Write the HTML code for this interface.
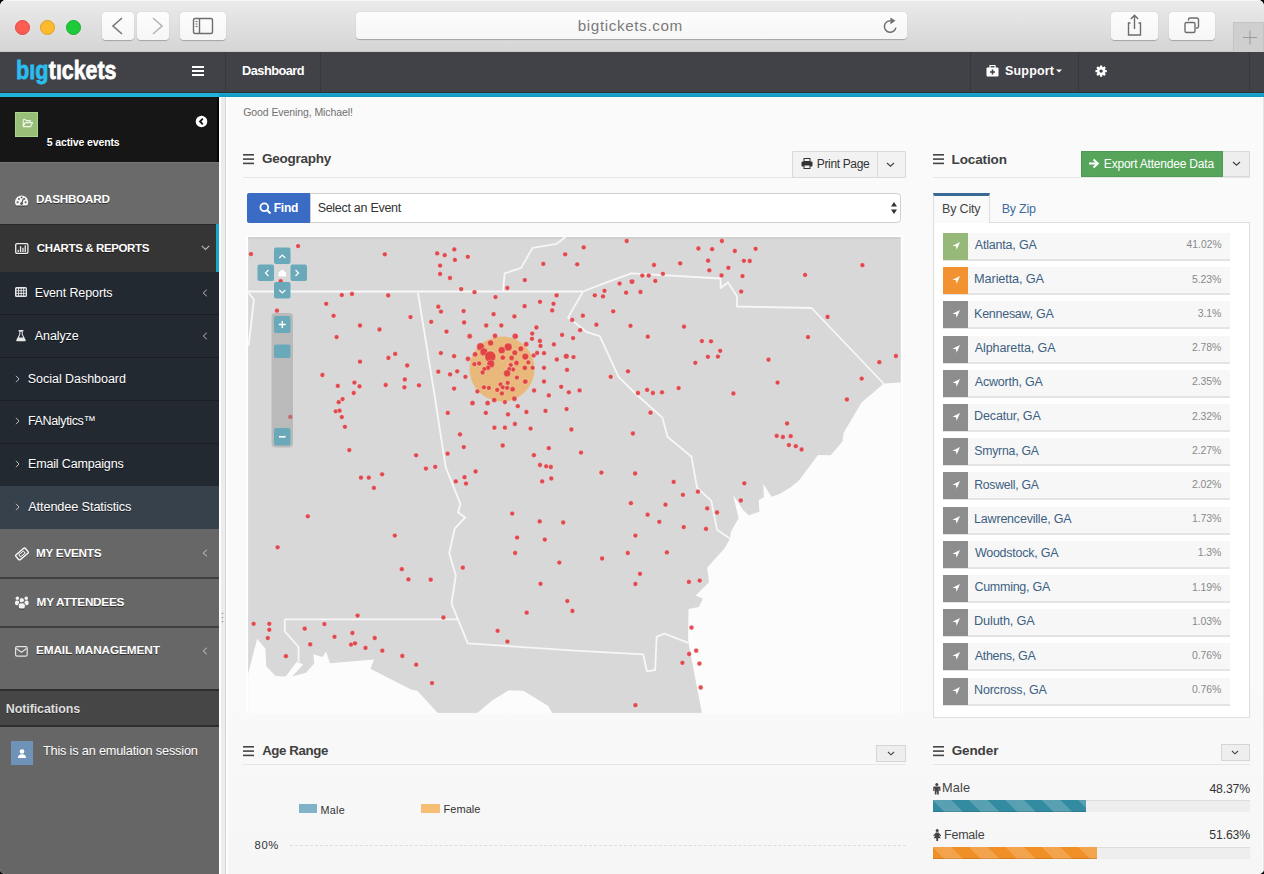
<!DOCTYPE html>
<html><head><meta charset="utf-8">
<style>
*{margin:0;padding:0;box-sizing:border-box}
html,body{width:1264px;height:874px;overflow:hidden;background:#000}
body{font-family:"Liberation Sans",sans-serif;position:relative}
.a{position:absolute}
#win{position:absolute;left:0;top:0;width:1264px;height:874px;border-radius:6px 6px 5px 5px;overflow:hidden;background:#fafafa}
#chrome{left:0;top:0;width:1264px;height:52px;background:linear-gradient(#ebebeb,#d5d5d5);border-bottom:1px solid #c8c8c8}
.tl{width:15px;height:15px;border-radius:50%;top:20px}
.cbtn{background:linear-gradient(#fdfdfd,#f6f6f6);border-radius:4px;box-shadow:0 0.5px 1px rgba(0,0,0,.25)}
#nav{left:0;top:52px;width:1264px;height:42px;background:#414247;border-bottom:1px solid #333}
.nd{top:52px;width:1px;height:41px;background:#37383c}
.wt{color:#fff;font-weight:bold}
#side{left:0;top:97px;width:219px;height:777px;background:#666}
.si{position:absolute;left:0;width:219px;color:#fff}
.tx{position:absolute;white-space:nowrap}
.lbl{position:absolute;white-space:nowrap}
</style></head><body>
<div id="win">
<!-- browser chrome -->
<div id="chrome" class="a">
  <div class="a" style="left:0;top:0;width:1264px;height:1px;background:#f6f6f6"></div>
  <div class="a tl" style="left:15px;background:#fd5c53;border:0.5px solid #e2473f"></div>
  <div class="a tl" style="left:40px;background:#fdbb2b;border:0.5px solid #dfa023"></div>
  <div class="a tl" style="left:66px;background:#1dcb3a;border:0.5px solid #17ad2e"></div>
  <div class="a cbtn" style="left:102px;top:12px;width:32px;height:28px"></div>
  <div class="a cbtn" style="left:137px;top:12px;width:32px;height:28px"></div>
  <svg class="a" style="left:102px;top:12px" width="67" height="28"><path d="M20 6 L11 14 L20 22" fill="none" stroke="#777" stroke-width="1.6"/><path d="M51 6 L60 14 L51 22" fill="none" stroke="#b5b5b5" stroke-width="1.6"/></svg>
  <div class="a cbtn" style="left:180px;top:12px;width:46px;height:28px"></div>
  <svg class="a" style="left:180px;top:12px" width="46" height="28"><rect x="13.5" y="6.5" width="19" height="15" rx="1.5" fill="none" stroke="#6d6d6d" stroke-width="1.4"/><line x1="19.5" y1="7" x2="19.5" y2="21" stroke="#6d6d6d" stroke-width="1.4"/><rect x="15.5" y="9" width="2" height="1" fill="#6d6d6d"/><rect x="15.5" y="11.5" width="2" height="1" fill="#6d6d6d"/><rect x="15.5" y="14" width="2" height="1" fill="#6d6d6d"/></svg>
  <div class="a cbtn" style="left:356px;top:12px;width:551px;height:27px"></div>
  
  <svg class="a" style="left:881px;top:17px" width="18" height="18"><path d="M9.6 3.7 A5.8 5.8 0 1 0 14.9 10.6" fill="none" stroke="#707070" stroke-width="1.5"/><path d="M9.4 0.6 L14.5 3.8 L9.4 7.2 Z" fill="#707070"/></svg>
  <div class="a cbtn" style="left:1111px;top:12px;width:47px;height:28px"></div>
  <svg class="a" style="left:1111px;top:12px" width="47" height="28"><path d="M19.5 11 H17.5 V23 H29.5 V11 H27.5" fill="none" stroke="#6d6d6d" stroke-width="1.4"/><path d="M23.5 17 V3.5 M19.8 7 L23.5 3.3 L27.2 7" fill="none" stroke="#6d6d6d" stroke-width="1.4"/></svg>
  <div class="a cbtn" style="left:1169px;top:12px;width:46px;height:28px"></div>
  <svg class="a" style="left:1169px;top:12px" width="46" height="28"><rect x="16" y="10.5" width="10" height="10" rx="1.5" fill="none" stroke="#6d6d6d" stroke-width="1.4"/><path d="M19.5 8.5 V7.5 A1.5 1.5 0 0 1 21 6 H28 A1.5 1.5 0 0 1 29.5 7.5 V14.5 A1.5 1.5 0 0 1 28 16 H27" fill="none" stroke="#6d6d6d" stroke-width="1.4"/></svg>
  <div class="a" style="left:1233px;top:22px;width:31px;height:30px;background:#cfcfcf;border:1px solid #c4c4c4;border-bottom:none"></div>
  <svg class="a" style="left:1233px;top:22px" width="31" height="30"><path d="M10 15.5 H24 M17 8.5 V22.5" stroke="#9a9a9a" stroke-width="1"/></svg>
</div>
<!-- navbar -->
<div id="nav" class="a"></div>
<div class="a" style="left:0;top:92px;width:1264px;height:1px;background:#2f3034"></div>
<div class="a" style="left:0;top:93px;width:1264px;height:4px;background:linear-gradient(#1aa6cf,#0f97c0)"></div>
<div class="a" style="left:0;top:93px;width:219px;height:4px;background:#1fb1dc"></div>
<div class="a nd" style="left:225px"></div>
<div class="a nd" style="left:320px"></div>
<div class="a nd" style="left:970px"></div>
<div class="a nd" style="left:1078px"></div>
<div class="a nd" style="left:1249px"></div>
<svg class="a" style="left:0;top:52px" width="130" height="40" viewBox="0 52 130 40"><g font-family="Liberation Sans" font-weight="bold" font-size="26.5"><text x="16" y="79.1" fill="#2bbdee" stroke="#2bbdee" stroke-width="0.8" textLength="32.5" lengthAdjust="spacingAndGlyphs">bıg</text><text x="48.8" y="79.1" fill="#fff" stroke="#fff" stroke-width="0.8" textLength="67.6" lengthAdjust="spacingAndGlyphs">tıckets</text></g></svg>
<svg class="a" style="left:192px;top:65px" width="13" height="12"><rect x="0" y="1" width="12" height="2" fill="#fff"/><rect x="0" y="5" width="12" height="2" fill="#fff"/><rect x="0" y="9" width="12" height="2" fill="#fff"/></svg>

<svg class="a" style="left:986px;top:65px" width="14" height="12"><rect x="0.5" y="2.5" width="12" height="9" rx="1" fill="#fff"/><rect x="4" y="0.5" width="5" height="3" fill="none" stroke="#fff" stroke-width="1.2"/><path d="M6.5 4.5 V9.5 M4 7 H9" stroke="#414247" stroke-width="1.6"/></svg>

<svg class="a" style="left:1056px;top:69px" width="7" height="5"><path d="M0 0.5 H6 L3 3.5Z" fill="#fff"/></svg>
<svg class="a" style="left:1095px;top:65.2px" width="12.2" height="12.2"><g fill="#fff"><circle cx="6.1" cy="6.1" r="4.1"/><rect x="4.9" y="0.4" width="2.4" height="3" rx="0.4" transform="rotate(0 6.1 6.1)"/><rect x="4.9" y="0.4" width="2.4" height="3" rx="0.4" transform="rotate(45 6.1 6.1)"/><rect x="4.9" y="0.4" width="2.4" height="3" rx="0.4" transform="rotate(90 6.1 6.1)"/><rect x="4.9" y="0.4" width="2.4" height="3" rx="0.4" transform="rotate(135 6.1 6.1)"/><rect x="4.9" y="0.4" width="2.4" height="3" rx="0.4" transform="rotate(180 6.1 6.1)"/><rect x="4.9" y="0.4" width="2.4" height="3" rx="0.4" transform="rotate(225 6.1 6.1)"/><rect x="4.9" y="0.4" width="2.4" height="3" rx="0.4" transform="rotate(270 6.1 6.1)"/><rect x="4.9" y="0.4" width="2.4" height="3" rx="0.4" transform="rotate(315 6.1 6.1)"/></g><circle cx="6.1" cy="6.1" r="1.7" fill="#414247"/></svg>

<!-- sidebar -->
<div id="side" class="a"></div>
<div class="a" style="left:0;top:97px;width:219px;height:65px;background:#161616"></div>
<div class="a" style="left:217px;top:97px;width:2px;height:65px;background:#050505"></div>
<div class="a" style="left:15px;top:112px;width:23px;height:25px;background:#97bf78"></div>
<svg class="a" style="left:15px;top:112px" width="23" height="25"><rect x="0.5" y="0.5" width="22" height="24" fill="none" stroke="#a9d68c" stroke-width="1"/><path d="M8.2 14.6 V8.4 Q8.2 7.3 9.3 7.3 Q10.6 7.3 11.2 8.6 H15.2 V10.6 M8.2 14.6 L10.2 10.6 H17.6 L15.6 14.6 Z" fill="none" stroke="#eef6e8" stroke-width="1.1" stroke-linejoin="round"/></svg>

<svg class="a" style="left:195px;top:115px" width="13" height="13"><circle cx="6.5" cy="6.5" r="5.8" fill="#fff"/><path d="M7.8 3.6 L5 6.5 L7.8 9.4" fill="none" stroke="#161616" stroke-width="1.8"/></svg>
<!-- dashboard -->
<div class="a" style="left:0;top:162px;width:219px;height:62px;background:#6a6a6a;border-top:1px solid #767676"></div>

<svg class="a" style="left:15px;top:194.8px" width="14" height="13"><path d="M1.0 11.6 A6.6 6.6 0 1 1 12.2 11.6 Z" fill="rgba(0,0,0,.4)"/><path d="M1.0 10.6 A6.6 6.6 0 1 1 12.2 10.6 Z" fill="#f4f4f4"/><g fill="#555"><circle cx="2.6" cy="7.2" r="0.95"/><circle cx="3.9" cy="3.9" r="0.95"/><circle cx="6.6" cy="2.4" r="0.95"/><circle cx="10.6" cy="7.2" r="0.95"/><circle cx="9.3" cy="3.9" r="0.95"/><circle cx="6.6" cy="8.6" r="1.4"/></g><path d="M6.6 8.6 L8.4 3.6" stroke="#555" stroke-width="1.2"/></svg>
<!-- charts & reports -->
<div class="a" style="left:0;top:224px;width:219px;height:48px;background:#353535;border-top:1px solid #25282c"></div>
<div class="a" style="left:216px;top:224px;width:3px;height:48px;background:#1aa6cf"></div>

<svg class="a" style="left:15px;top:242.5px" width="14" height="12"><rect x="0.7" y="0.7" width="12.2" height="9.6" rx="1.3" fill="none" stroke="#f0f0f0" stroke-width="1.3"/><rect x="2.6" y="6.8" width="1.3" height="2.2" fill="#f0f0f0"/><rect x="4.9" y="3.2" width="1.3" height="5.8" fill="#f0f0f0"/><rect x="7.3" y="4.8" width="1.3" height="4.2" fill="#f0f0f0"/><rect x="9.6" y="2.4" width="1.3" height="6.6" fill="#f0f0f0"/><rect x="1.4" y="11" width="11" height="1" fill="rgba(0,0,0,.3)"/></svg>
<svg class="a" style="left:201px;top:245px" width="9" height="6"><path d="M0.8 0.8 L4.5 4.5 L8.2 0.8" fill="none" stroke="#bbb" stroke-width="1.1"/></svg>
<!-- submenu -->
<div class="a" style="left:0;top:272px;width:219px;height:257px;background:#222931"></div>
<div class="a" style="left:0;top:314px;width:219px;height:1px;background:#1a1f25"></div>
<div class="a" style="left:0;top:357px;width:219px;height:1px;background:#1a1f25"></div>
<div class="a" style="left:0;top:400px;width:219px;height:1px;background:#1a1f25"></div>
<div class="a" style="left:0;top:443px;width:219px;height:1px;background:#1a1f25"></div>
<div class="a" style="left:0;top:486px;width:219px;height:43px;background:#37414b"></div>

<svg class="a" style="left:15px;top:287.3px" width="12" height="11"><rect x="0" y="0" width="12" height="10" rx="1.6" fill="#e6e6e6"/><rect x="1.50" y="1.60" width="1.6" height="1.7" fill="#222931"/><rect x="4.05" y="1.60" width="1.6" height="1.7" fill="#222931"/><rect x="6.60" y="1.60" width="1.6" height="1.7" fill="#222931"/><rect x="9.15" y="1.60" width="1.6" height="1.7" fill="#222931"/><rect x="1.50" y="4.20" width="1.6" height="1.7" fill="#222931"/><rect x="4.05" y="4.20" width="1.6" height="1.7" fill="#222931"/><rect x="6.60" y="4.20" width="1.6" height="1.7" fill="#222931"/><rect x="9.15" y="4.20" width="1.6" height="1.7" fill="#222931"/><rect x="1.50" y="6.80" width="1.6" height="1.7" fill="#222931"/><rect x="4.05" y="6.80" width="1.6" height="1.7" fill="#222931"/><rect x="6.60" y="6.80" width="1.6" height="1.7" fill="#222931"/><rect x="9.15" y="6.80" width="1.6" height="1.7" fill="#222931"/></svg>
<svg class="a" style="left:202px;top:289px" width="6" height="8"><path d="M4.8 0.8 L1.2 4 L4.8 7.2" fill="none" stroke="#bbb" stroke-width="1"/></svg>

<svg class="a" style="left:16px;top:330px" width="10" height="12"><rect x="2.6" y="0" width="4.8" height="1.4" fill="#e8e8e8"/><path d="M3.3 1.2 V4.2 L0.3 10 Q0 11.2 1.2 11.2 H8.8 Q10 11.2 9.7 10 L6.7 4.2 V1.2 Z" fill="#e8e8e8"/><path d="M4.3 2 V4.5 L2.8 7.4 H7.2 L5.7 4.5 V2Z" fill="#222931"/></svg>
<svg class="a" style="left:202px;top:332px" width="6" height="8"><path d="M4.8 0.8 L1.2 4 L4.8 7.2" fill="none" stroke="#bbb" stroke-width="1"/></svg>




<svg class="a" style="left:15px;top:374.5px" width="5" height="8"><path d="M1 0.8 L4 4 L1 7.2" fill="none" stroke="#bbb" stroke-width="1"/></svg>
<svg class="a" style="left:15px;top:417px" width="5" height="8"><path d="M1 0.8 L4 4 L1 7.2" fill="none" stroke="#bbb" stroke-width="1"/></svg>
<svg class="a" style="left:15px;top:460px" width="5" height="8"><path d="M1 0.8 L4 4 L1 7.2" fill="none" stroke="#bbb" stroke-width="1"/></svg>
<svg class="a" style="left:15px;top:503px" width="5" height="8"><path d="M1 0.8 L4 4 L1 7.2" fill="none" stroke="#bbb" stroke-width="1"/></svg>
<!-- lower menu -->
<div class="a" style="left:0;top:529px;width:219px;height:160px;background:#676767"></div>
<div class="a" style="left:0;top:577px;width:219px;height:2px;background:#3f3f3f"></div>
<div class="a" style="left:0;top:626px;width:219px;height:2px;background:#3f3f3f"></div>

<svg class="a" style="left:15px;top:547px" width="14" height="14"><g transform="rotate(-40 7 7)"><rect x="0.8" y="3.8" width="12.4" height="6.4" rx="1.2" fill="none" stroke="#fff" stroke-width="1.3"/><rect x="4" y="5.6" width="6" height="2.8" fill="none" stroke="#fff" stroke-width="0.9"/></g></svg>
<svg class="a" style="left:202px;top:549px" width="6" height="8"><path d="M4.8 0.8 L1.2 4 L4.8 7.2" fill="none" stroke="#ccc" stroke-width="1"/></svg>

<svg class="a" style="left:15px;top:595.5px" width="14" height="15"><g fill="rgba(0,0,0,.35)" transform="translate(0,1)"><rect x="3.6" y="7.2" width="6.4" height="5.6" rx="2.2"/></g><g fill="#f2f2f2"><circle cx="2.4" cy="2.2" r="1.8"/><circle cx="11.2" cy="2.2" r="1.8"/><circle cx="6.8" cy="4.2" r="2.3"/><rect x="0" y="4.6" width="4.2" height="4.6" rx="1.8"/><rect x="9.4" y="4.6" width="4.2" height="4.6" rx="1.8"/><rect x="3.6" y="7" width="6.4" height="5.6" rx="2.2"/></g><g fill="none" stroke="#676767" stroke-width="0.8"><circle cx="6.8" cy="4.2" r="2.7"/><path d="M3.2 12.6 V9 Q3.2 6.6 6.8 6.6 Q10.4 6.6 10.4 9 V12.6"/></g></svg>

<svg class="a" style="left:15px;top:645.5px" width="13" height="11"><rect x="0.6" y="0.6" width="11.6" height="9.6" rx="1.5" fill="none" stroke="#e4e4e4" stroke-width="1.2"/><path d="M1.2 2.6 L6.4 6.2 L11.6 2.6" fill="none" stroke="#e4e4e4" stroke-width="1.2"/></svg>
<svg class="a" style="left:202px;top:647px" width="6" height="8"><path d="M4.8 0.8 L1.2 4 L4.8 7.2" fill="none" stroke="#ccc" stroke-width="1"/></svg>
<!-- notifications -->
<div class="a" style="left:0;top:689px;width:219px;height:38px;background:#464646;border-top:2px solid #2e2e2e;border-bottom:2px solid #2e2e2e"></div>

<div class="a" style="left:11px;top:741px;width:22px;height:24px;background:#6f93b8"></div>
<svg class="a" style="left:11px;top:741px" width="22" height="24"><circle cx="11" cy="10.5" r="2.3" fill="#fff"/><path d="M7 17 Q7 13.3 11 13.3 Q15 13.3 15 17Z" fill="#fff"/></svg>

<!-- content -->
<div class="a" style="left:228px;top:97px;width:1034px;height:777px;background:linear-gradient(#fafafa 0px,#fafafa 560px,#f6f6f6 777px)"></div>
<div class="a" style="left:1262.5px;top:97px;width:1.5px;height:777px;background:#e4e4e4"></div>

<!-- geography header -->
<svg class="a" style="left:243px;top:154px" width="12" height="11"><rect y="0" width="11" height="1.6" fill="#444"/><rect y="4.3" width="11" height="1.6" fill="#444"/><rect y="8.6" width="11" height="1.6" fill="#444"/></svg>

<div class="a" style="left:243px;top:177px;width:663px;height:1px;background:#e6e6e6"></div>
<div class="a" style="left:792px;top:151px;width:114px;height:27px;background:#f2f2f2;border:1px solid #d9d9d9;border-radius:1px"></div>
<div class="a" style="left:877px;top:151px;width:1px;height:27px;background:#d9d9d9"></div>
<svg class="a" style="left:801px;top:158px" width="12" height="11"><rect x="3" y="0.5" width="6" height="3" fill="none" stroke="#333" stroke-width="1"/><rect x="0.5" y="3.5" width="11" height="5" rx="1" fill="#333"/><rect x="3" y="7" width="6" height="3.5" fill="#f2f2f2" stroke="#333" stroke-width="1"/></svg>

<svg class="a" style="left:886px;top:162px" width="9" height="6"><path d="M1 1 L4.5 4.3 L8 1" fill="none" stroke="#444" stroke-width="1.2"/></svg>
<!-- find + select -->
<div class="a" style="left:247px;top:193px;width:63px;height:30px;background:#3a6cc6;border-radius:2px 0 0 2px"></div>
<svg class="a" style="left:259px;top:202px" width="13" height="13"><circle cx="5.3" cy="5.3" r="3.9" fill="none" stroke="#fff" stroke-width="1.8"/><path d="M8.2 8.2 L11.5 11.5" stroke="#fff" stroke-width="2"/></svg>

<div class="a" style="left:310px;top:193px;width:591px;height:30px;background:#fff;border:1px solid #cfcfcf;border-radius:0 4px 4px 0"></div>

<svg class="a" style="left:890px;top:201px" width="8" height="14"><path d="M4 1 L7 5.5 H1Z M4 13 L7 8.5 H1Z" fill="#333"/></svg>
<!-- map -->
<svg id="mapsvg" class="a" style="left:246px;top:235px" width="658" height="479" viewBox="246 235 658 479">
<rect x="246.5" y="235.6" width="656.5" height="477.4" fill="#ffffff"/>
<rect x="248.1" y="237.2" width="652.7" height="475.7" fill="#d8d8d8"/>
<rect x="248.1" y="237.2" width="652.7" height="1.6" fill="#cdcdcd"/>
<polygon points="900.8,382.5 883.5,383.5 871.7,394 861.7,402.2 843.5,433.1 842.6,441.3 830.7,455.3 818,455 798.9,480.5 790.7,487.2 780,493.7 771.6,496.8 763.3,483.9 763.9,497.3 758.7,499.9 759.4,511.7 748.9,515.3 743.3,510.2 733,494.7 738.6,517.9 730.9,531.8 729.9,539 724.6,548.2 707.1,567.8 709.1,582.2 695.7,595.6 702.9,598.7 698.8,606.9 688.5,609 688.1,640.9 701.9,713 900.8,713 900.8,382.5" fill="#fcfcfc"/>
<polygon points="248.1,713 248.1,672.8 248.5,672.8 257.1,638.7 265.4,648.8 266.3,666.3 275.6,676.1 285.7,676.5 296.8,661.7 303.2,664.5 292.1,676.5 306,672.8 314.3,663.2 313.3,654.3 322.5,657.1 326.2,651.6 329.9,663.2 374.1,659.5 370.5,668.7 411,689.4 417.4,690.8 437.7,713 477.3,713 492.1,700.4 508.7,690.3 523.4,690.8 548.3,706 552,713" fill="#fcfcfc"/>
<g fill="none" stroke="#f7f7f7" stroke-width="1.8" stroke-linejoin="round">
<polyline points="247,291.5 583,291.5"/>
<polyline points="248.5,292.5 253.9,299.8 248.5,346.2"/>
<polyline points="417.9,292.5 434.7,396 445.6,466.8 460.5,504.1 458,512.3 465.2,517.4 454.7,528.7 449.2,553 455.8,575.5 451.5,603.7 467.8,643.3 575,650.7 643.2,654.3 646.9,671.3 655.2,670 656.6,636.8 664.4,633.7 688.3,642.9"/>
<polyline points="284.8,619.3 457.5,619.3"/>
<polyline points="284.8,619.3 284.8,631.3 298.6,647 298.6,661.7"/>
<polyline points="502.9,291.6 504.7,273.4 521.1,267.9 532.6,247.9 556.6,243.9 566.6,236"/>
<polyline points="583,291.5 568,317.6 572.3,320.6 586.9,332.2 599.8,336.1 618.7,377.2 637,395 662.4,417.7 667.5,436.8 691.5,456.8 697,487.7 711.3,500.9 717,529.7 729.9,538.5"/>
<polyline points="583,291.5 610,281.2 631.4,273.4 720.6,278.5 720.6,288 727.9,282.5 737,296.2 737,306.5 811.6,308 883.5,383.5"/>
</g>
<circle cx="502" cy="369" r="32.5" fill="#e9b97b"/>
<g fill="#e03238" fill-opacity="0.86" stroke="rgba(255,255,255,0.3)" stroke-width="1">
<circle cx="469.7" cy="336.2" r="2.6"/>
<circle cx="495.0" cy="335.8" r="2.6"/>
<circle cx="515.2" cy="336.2" r="3.0"/>
<circle cx="532.2" cy="333.6" r="2.4"/>
<circle cx="532.0" cy="338.8" r="2.4"/>
<circle cx="539.9" cy="341.0" r="2.4"/>
<circle cx="540.5" cy="345.9" r="2.4"/>
<circle cx="526.2" cy="344.2" r="2.6"/>
<circle cx="490.6" cy="342.9" r="3.0"/>
<circle cx="480.5" cy="346.7" r="3.9"/>
<circle cx="483.9" cy="351.9" r="3.9"/>
<circle cx="490.3" cy="356.6" r="5.6"/>
<circle cx="490.8" cy="363.9" r="3.9"/>
<circle cx="488.0" cy="367.8" r="2.6"/>
<circle cx="484.3" cy="369.1" r="2.4"/>
<circle cx="482.6" cy="372.5" r="2.4"/>
<circle cx="475.1" cy="354.3" r="2.6"/>
<circle cx="468.0" cy="358.8" r="2.6"/>
<circle cx="474.4" cy="364.2" r="2.4"/>
<circle cx="479.2" cy="363.5" r="2.4"/>
<circle cx="477.4" cy="391.4" r="2.4"/>
<circle cx="483.9" cy="387.3" r="2.4"/>
<circle cx="488.9" cy="387.9" r="2.4"/>
<circle cx="472.5" cy="403.0" r="2.6"/>
<circle cx="487.6" cy="403.0" r="2.6"/>
<circle cx="494.2" cy="400.0" r="2.6"/>
<circle cx="504.9" cy="402.1" r="2.4"/>
<circle cx="514.4" cy="398.7" r="2.6"/>
<circle cx="501.7" cy="350.2" r="3.6"/>
<circle cx="508.2" cy="347.0" r="4.0"/>
<circle cx="502.8" cy="357.5" r="2.6"/>
<circle cx="514.8" cy="352.7" r="2.8"/>
<circle cx="511.6" cy="357.9" r="2.6"/>
<circle cx="520.8" cy="348.7" r="2.8"/>
<circle cx="525.3" cy="356.6" r="3.4"/>
<circle cx="516.5" cy="362.9" r="2.6"/>
<circle cx="528.3" cy="362.4" r="2.4"/>
<circle cx="510.7" cy="365.0" r="2.4"/>
<circle cx="513.1" cy="369.5" r="2.4"/>
<circle cx="509.2" cy="369.1" r="2.4"/>
<circle cx="507.1" cy="373.3" r="3.6"/>
<circle cx="524.8" cy="367.8" r="2.6"/>
<circle cx="532.6" cy="367.8" r="2.4"/>
<circle cx="516.9" cy="377.6" r="2.4"/>
<circle cx="525.3" cy="381.5" r="2.6"/>
<circle cx="534.1" cy="390.5" r="2.4"/>
<circle cx="533.7" cy="355.5" r="2.4"/>
<circle cx="537.1" cy="353.0" r="2.4"/>
<circle cx="544.0" cy="353.2" r="2.4"/>
<circle cx="544.0" cy="367.8" r="2.4"/>
<circle cx="544.0" cy="381.5" r="2.4"/>
<circle cx="465.4" cy="376.8" r="2.4"/>
<circle cx="500.6" cy="384.5" r="2.4"/>
<circle cx="507.7" cy="382.8" r="2.4"/>
<circle cx="502.8" cy="387.3" r="2.4"/>
<circle cx="507.1" cy="387.9" r="2.4"/>
<circle cx="497.2" cy="389.9" r="2.4"/>
<circle cx="512.6" cy="389.2" r="2.6"/>
<circle cx="501.9" cy="393.5" r="2.4"/>
<circle cx="251.0" cy="254.1" r="2.4"/>
<circle cx="298.1" cy="246.1" r="2.4"/>
<circle cx="384.8" cy="254.3" r="2.4"/>
<circle cx="280.7" cy="281.2" r="2.4"/>
<circle cx="341.8" cy="295.1" r="2.4"/>
<circle cx="352.0" cy="294.0" r="2.4"/>
<circle cx="388.2" cy="295.4" r="2.4"/>
<circle cx="326.2" cy="303.8" r="2.4"/>
<circle cx="277.0" cy="310.7" r="2.4"/>
<circle cx="333.6" cy="315.8" r="2.4"/>
<circle cx="410.5" cy="317.1" r="2.4"/>
<circle cx="360.0" cy="325.5" r="2.4"/>
<circle cx="379.5" cy="329.5" r="2.4"/>
<circle cx="336.6" cy="337.1" r="2.4"/>
<circle cx="395.2" cy="353.9" r="2.4"/>
<circle cx="388.4" cy="357.9" r="2.4"/>
<circle cx="360.0" cy="361.7" r="2.4"/>
<circle cx="407.2" cy="365.5" r="2.4"/>
<circle cx="322.4" cy="375.0" r="2.4"/>
<circle cx="337.8" cy="385.9" r="2.4"/>
<circle cx="354.4" cy="382.6" r="2.4"/>
<circle cx="359.5" cy="386.3" r="2.4"/>
<circle cx="385.7" cy="385.0" r="2.4"/>
<circle cx="404.8" cy="379.5" r="2.4"/>
<circle cx="404.4" cy="387.3" r="2.4"/>
<circle cx="353.7" cy="393.0" r="2.4"/>
<circle cx="437.2" cy="253.4" r="2.4"/>
<circle cx="444.7" cy="255.2" r="2.4"/>
<circle cx="454.3" cy="249.4" r="2.4"/>
<circle cx="454.9" cy="259.9" r="2.4"/>
<circle cx="467.8" cy="256.8" r="2.4"/>
<circle cx="440.1" cy="265.6" r="2.4"/>
<circle cx="440.1" cy="274.0" r="2.4"/>
<circle cx="450.0" cy="278.0" r="2.4"/>
<circle cx="461.2" cy="289.1" r="2.4"/>
<circle cx="474.5" cy="292.2" r="2.4"/>
<circle cx="507.3" cy="288.0" r="2.4"/>
<circle cx="524.8" cy="280.1" r="2.4"/>
<circle cx="543.3" cy="263.9" r="2.4"/>
<circle cx="565.2" cy="254.3" r="2.4"/>
<circle cx="495.5" cy="297.1" r="2.4"/>
<circle cx="556.6" cy="295.4" r="2.4"/>
<circle cx="540.0" cy="301.8" r="2.4"/>
<circle cx="553.5" cy="303.8" r="2.4"/>
<circle cx="552.2" cy="310.4" r="2.4"/>
<circle cx="524.6" cy="306.2" r="2.4"/>
<circle cx="438.3" cy="306.7" r="2.4"/>
<circle cx="441.0" cy="311.6" r="2.4"/>
<circle cx="463.6" cy="311.1" r="2.4"/>
<circle cx="493.6" cy="314.2" r="2.4"/>
<circle cx="514.4" cy="316.4" r="2.4"/>
<circle cx="572.2" cy="319.9" r="2.4"/>
<circle cx="431.2" cy="321.8" r="2.4"/>
<circle cx="464.1" cy="322.5" r="2.4"/>
<circle cx="486.2" cy="325.5" r="2.4"/>
<circle cx="501.3" cy="325.5" r="2.4"/>
<circle cx="536.4" cy="327.5" r="2.4"/>
<circle cx="446.5" cy="331.6" r="2.4"/>
<circle cx="562.1" cy="334.9" r="2.4"/>
<circle cx="573.1" cy="338.1" r="2.4"/>
<circle cx="553.9" cy="344.4" r="2.4"/>
<circle cx="566.3" cy="356.2" r="2.8"/>
<circle cx="573.5" cy="357.1" r="2.4"/>
<circle cx="440.9" cy="353.1" r="2.4"/>
<circle cx="454.1" cy="356.2" r="2.4"/>
<circle cx="556.8" cy="359.5" r="2.4"/>
<circle cx="567.0" cy="369.9" r="2.4"/>
<circle cx="438.3" cy="371.7" r="2.4"/>
<circle cx="450.1" cy="374.4" r="2.4"/>
<circle cx="457.2" cy="371.3" r="2.4"/>
<circle cx="561.2" cy="386.8" r="2.4"/>
<circle cx="568.8" cy="392.3" r="2.4"/>
<circle cx="419.0" cy="385.3" r="2.4"/>
<circle cx="454.1" cy="388.6" r="2.4"/>
<circle cx="548.8" cy="395.4" r="2.4"/>
<circle cx="583.7" cy="247.4" r="2.4"/>
<circle cx="626.7" cy="241.0" r="2.4"/>
<circle cx="577.2" cy="264.3" r="2.4"/>
<circle cx="654.0" cy="265.0" r="2.4"/>
<circle cx="680.2" cy="263.4" r="2.4"/>
<circle cx="698.4" cy="248.5" r="2.4"/>
<circle cx="712.1" cy="249.2" r="2.4"/>
<circle cx="721.9" cy="241.0" r="2.4"/>
<circle cx="734.8" cy="251.0" r="2.4"/>
<circle cx="708.1" cy="260.7" r="2.4"/>
<circle cx="709.3" cy="270.3" r="2.4"/>
<circle cx="728.4" cy="267.8" r="2.4"/>
<circle cx="721.5" cy="275.4" r="2.4"/>
<circle cx="642.3" cy="275.6" r="2.4"/>
<circle cx="648.7" cy="275.6" r="2.4"/>
<circle cx="662.9" cy="273.8" r="2.4"/>
<circle cx="655.3" cy="280.9" r="2.4"/>
<circle cx="632.0" cy="281.6" r="2.7"/>
<circle cx="619.6" cy="283.6" r="2.4"/>
<circle cx="604.5" cy="290.8" r="2.4"/>
<circle cx="594.8" cy="295.3" r="2.4"/>
<circle cx="603.0" cy="296.4" r="2.4"/>
<circle cx="626.1" cy="292.7" r="2.4"/>
<circle cx="640.5" cy="292.0" r="2.4"/>
<circle cx="613.2" cy="311.3" r="2.4"/>
<circle cx="582.9" cy="315.7" r="2.4"/>
<circle cx="596.4" cy="324.7" r="2.4"/>
<circle cx="580.1" cy="330.2" r="2.4"/>
<circle cx="630.5" cy="325.8" r="2.4"/>
<circle cx="647.8" cy="336.7" r="2.4"/>
<circle cx="684.0" cy="326.7" r="2.4"/>
<circle cx="701.9" cy="341.1" r="2.4"/>
<circle cx="711.0" cy="341.3" r="2.4"/>
<circle cx="720.2" cy="350.8" r="2.4"/>
<circle cx="707.9" cy="356.8" r="2.4"/>
<circle cx="717.9" cy="356.6" r="2.4"/>
<circle cx="695.3" cy="362.8" r="2.4"/>
<circle cx="628.0" cy="371.3" r="2.4"/>
<circle cx="610.7" cy="376.8" r="2.4"/>
<circle cx="579.6" cy="390.4" r="2.4"/>
<circle cx="638.0" cy="393.0" r="2.4"/>
<circle cx="647.1" cy="389.9" r="2.4"/>
<circle cx="652.9" cy="393.0" r="2.4"/>
<circle cx="662.0" cy="392.3" r="2.4"/>
<circle cx="678.6" cy="388.1" r="2.4"/>
<circle cx="733.4" cy="393.5" r="2.4"/>
<circle cx="755.6" cy="248.8" r="2.4"/>
<circle cx="743.9" cy="260.8" r="2.4"/>
<circle cx="749.7" cy="261.0" r="2.4"/>
<circle cx="742.5" cy="276.1" r="2.4"/>
<circle cx="741.2" cy="291.6" r="2.4"/>
<circle cx="805.1" cy="274.9" r="2.4"/>
<circle cx="862.4" cy="265.2" r="2.4"/>
<circle cx="827.6" cy="316.9" r="2.4"/>
<circle cx="808.0" cy="337.1" r="2.4"/>
<circle cx="768.5" cy="359.7" r="2.4"/>
<circle cx="777.6" cy="382.6" r="2.4"/>
<circle cx="861.7" cy="378.6" r="2.4"/>
<circle cx="879.3" cy="362.2" r="2.4"/>
<circle cx="895.9" cy="356.0" r="2.4"/>
<circle cx="290.3" cy="416.9" r="2.4"/>
<circle cx="342.6" cy="399.1" r="2.4"/>
<circle cx="338.7" cy="402.2" r="2.4"/>
<circle cx="335.8" cy="411.3" r="2.4"/>
<circle cx="339.6" cy="410.7" r="2.4"/>
<circle cx="341.8" cy="417.1" r="2.4"/>
<circle cx="344.9" cy="426.8" r="2.4"/>
<circle cx="349.3" cy="450.1" r="2.4"/>
<circle cx="361.0" cy="477.7" r="2.4"/>
<circle cx="368.8" cy="477.7" r="2.4"/>
<circle cx="382.1" cy="474.3" r="2.4"/>
<circle cx="373.9" cy="487.9" r="2.4"/>
<circle cx="307.8" cy="516.3" r="2.4"/>
<circle cx="394.8" cy="535.6" r="2.4"/>
<circle cx="277.6" cy="547.3" r="2.4"/>
<circle cx="517.8" cy="406.2" r="2.4"/>
<circle cx="447.8" cy="412.9" r="2.4"/>
<circle cx="485.8" cy="412.9" r="2.4"/>
<circle cx="508.0" cy="414.4" r="2.4"/>
<circle cx="526.4" cy="412.0" r="2.4"/>
<circle cx="545.5" cy="410.9" r="2.4"/>
<circle cx="566.6" cy="409.1" r="2.4"/>
<circle cx="494.4" cy="427.7" r="2.4"/>
<circle cx="504.9" cy="427.7" r="2.4"/>
<circle cx="514.9" cy="424.0" r="2.4"/>
<circle cx="530.6" cy="428.6" r="2.4"/>
<circle cx="571.4" cy="429.5" r="2.4"/>
<circle cx="460.0" cy="434.4" r="2.4"/>
<circle cx="463.8" cy="447.1" r="2.4"/>
<circle cx="502.7" cy="445.5" r="2.4"/>
<circle cx="548.8" cy="448.2" r="2.4"/>
<circle cx="416.1" cy="455.3" r="2.4"/>
<circle cx="447.6" cy="453.7" r="2.4"/>
<circle cx="533.9" cy="455.2" r="2.4"/>
<circle cx="425.9" cy="468.6" r="2.4"/>
<circle cx="435.2" cy="466.8" r="2.4"/>
<circle cx="475.6" cy="471.5" r="2.4"/>
<circle cx="464.5" cy="477.2" r="2.4"/>
<circle cx="455.8" cy="481.4" r="2.4"/>
<circle cx="466.0" cy="483.6" r="2.4"/>
<circle cx="540.0" cy="465.0" r="2.4"/>
<circle cx="546.2" cy="466.3" r="2.4"/>
<circle cx="550.8" cy="467.0" r="2.4"/>
<circle cx="551.3" cy="478.5" r="2.4"/>
<circle cx="542.2" cy="481.4" r="2.4"/>
<circle cx="512.2" cy="513.6" r="2.4"/>
<circle cx="539.7" cy="521.4" r="2.4"/>
<circle cx="563.2" cy="522.5" r="2.4"/>
<circle cx="517.1" cy="537.6" r="2.4"/>
<circle cx="544.8" cy="539.6" r="2.4"/>
<circle cx="515.1" cy="553.0" r="2.4"/>
<circle cx="650.5" cy="412.7" r="2.4"/>
<circle cx="632.9" cy="433.5" r="2.4"/>
<circle cx="581.0" cy="452.6" r="2.4"/>
<circle cx="601.4" cy="472.6" r="2.4"/>
<circle cx="635.1" cy="473.5" r="2.4"/>
<circle cx="673.7" cy="481.9" r="2.4"/>
<circle cx="682.9" cy="494.8" r="2.4"/>
<circle cx="697.9" cy="491.7" r="2.4"/>
<circle cx="630.9" cy="503.2" r="2.4"/>
<circle cx="665.5" cy="504.7" r="2.4"/>
<circle cx="707.2" cy="508.4" r="2.4"/>
<circle cx="717.0" cy="512.5" r="2.4"/>
<circle cx="647.6" cy="514.7" r="2.4"/>
<circle cx="659.3" cy="521.8" r="2.4"/>
<circle cx="683.7" cy="527.1" r="2.4"/>
<circle cx="706.0" cy="528.9" r="2.4"/>
<circle cx="635.4" cy="535.6" r="2.4"/>
<circle cx="627.8" cy="553.0" r="2.4"/>
<circle cx="666.9" cy="552.4" r="2.4"/>
<circle cx="846.9" cy="399.5" r="2.4"/>
<circle cx="787.1" cy="423.5" r="2.4"/>
<circle cx="776.7" cy="435.9" r="2.4"/>
<circle cx="782.9" cy="437.0" r="2.4"/>
<circle cx="790.7" cy="436.2" r="2.4"/>
<circle cx="788.9" cy="445.1" r="2.4"/>
<circle cx="795.8" cy="446.2" r="2.4"/>
<circle cx="801.6" cy="449.5" r="2.4"/>
<circle cx="744.3" cy="483.3" r="2.4"/>
<circle cx="740.8" cy="500.5" r="2.4"/>
<circle cx="401.8" cy="569.2" r="2.4"/>
<circle cx="408.4" cy="579.4" r="2.4"/>
<circle cx="357.6" cy="615.6" r="2.4"/>
<circle cx="253.6" cy="623.8" r="2.4"/>
<circle cx="269.3" cy="623.8" r="2.4"/>
<circle cx="269.3" cy="629.8" r="2.4"/>
<circle cx="267.8" cy="638.1" r="2.4"/>
<circle cx="304.7" cy="628.7" r="2.4"/>
<circle cx="324.4" cy="624.1" r="2.4"/>
<circle cx="334.5" cy="636.8" r="2.4"/>
<circle cx="352.4" cy="633.0" r="2.4"/>
<circle cx="310.2" cy="644.4" r="2.4"/>
<circle cx="351.1" cy="644.6" r="2.4"/>
<circle cx="355.0" cy="643.3" r="2.4"/>
<circle cx="365.5" cy="647.9" r="2.4"/>
<circle cx="374.7" cy="638.0" r="2.4"/>
<circle cx="382.3" cy="650.7" r="2.4"/>
<circle cx="402.3" cy="656.0" r="2.4"/>
<circle cx="285.9" cy="656.2" r="2.4"/>
<circle cx="559.3" cy="562.6" r="2.4"/>
<circle cx="462.8" cy="567.7" r="2.4"/>
<circle cx="430.7" cy="579.7" r="2.4"/>
<circle cx="540.5" cy="583.8" r="2.4"/>
<circle cx="567.3" cy="601.1" r="2.4"/>
<circle cx="572.4" cy="611.0" r="2.4"/>
<circle cx="526.7" cy="612.7" r="2.4"/>
<circle cx="443.4" cy="617.5" r="2.4"/>
<circle cx="497.6" cy="630.8" r="2.4"/>
<circle cx="507.4" cy="641.6" r="2.4"/>
<circle cx="416.2" cy="664.7" r="2.4"/>
<circle cx="432.0" cy="683.1" r="2.4"/>
<circle cx="602.1" cy="558.5" r="2.4"/>
<circle cx="640.0" cy="573.8" r="2.4"/>
<circle cx="635.4" cy="584.0" r="2.4"/>
<circle cx="688.9" cy="581.9" r="2.4"/>
<circle cx="699.7" cy="580.6" r="2.4"/>
<circle cx="691.5" cy="627.6" r="2.4"/>
<circle cx="696.2" cy="650.7" r="2.4"/>
<circle cx="689.1" cy="654.0" r="2.4"/>
<circle cx="682.4" cy="662.8" r="2.4"/>
<circle cx="699.4" cy="663.6" r="2.4"/>
<circle cx="700.7" cy="687.5" r="2.4"/>
<circle cx="635.4" cy="705.2" r="2.4"/>
</g>
<g fill="#6aa9ba">
<rect x="274" y="247.5" width="16.5" height="16.5" rx="2"/>
<rect x="257.5" y="264.5" width="16.5" height="16.5" rx="2"/>
<rect x="290.5" y="264.5" width="16.5" height="16.5" rx="2"/>
<rect x="274" y="282" width="16.5" height="16.5" rx="2"/>
</g>
<rect x="271.5" y="313" width="21.5" height="134.5" rx="4" fill="rgba(150,150,150,0.45)"/>
<g fill="#6aa9ba"><rect x="274" y="316" width="16.5" height="17" rx="2"/><rect x="274" y="344.5" width="16.5" height="13.5" rx="2"/><rect x="274" y="428" width="16.5" height="17.5" rx="2"/></g>
<g fill="none" stroke="#fff" stroke-width="1.2"><path d="M279.3 258 L282.3 255 L285.3 258"/><path d="M279.3 290 L282.3 293 L285.3 290"/><path d="M268.5 270 L265.5 273 L268.5 276"/><path d="M295.5 270 L298.5 273 L295.5 276"/></g>
<path d="M282.3 269.5 L286 272.5 V276.5 H278.6 V272.5Z" fill="#fff"/>
<path d="M278.8 324.5 H285.8 M282.3 321 V328" stroke="#fff" stroke-width="1.4"/>
<path d="M279 436.8 H285.6" stroke="#fff" stroke-width="1.6"/>
</svg>


<!-- location header -->
<svg class="a" style="left:933px;top:154px" width="12" height="11"><rect y="0" width="11" height="1.6" fill="#444"/><rect y="4.3" width="11" height="1.6" fill="#444"/><rect y="8.6" width="11" height="1.6" fill="#444"/></svg>

<div class="a" style="left:933px;top:177px;width:317px;height:1px;background:#e6e6e6"></div>
<div class="a" style="left:1081px;top:151px;width:142px;height:26px;background:#56a55a;border:1px solid #4f9b53"></div>
<svg class="a" style="left:1088px;top:157px" width="12" height="13"><path d="M1 6.5 H9.5 M5.5 2.5 L9.8 6.5 L5.5 10.5" fill="none" stroke="#fff" stroke-width="2"/></svg>

<div class="a" style="left:1223px;top:151px;width:27px;height:26px;background:#eeeeee;border:1px solid #d9d9d9;border-left:none"></div>
<svg class="a" style="left:1232px;top:161px" width="9" height="6"><path d="M1 1 L4.5 4.3 L8 1" fill="none" stroke="#444" stroke-width="1.2"/></svg>
<!-- tabs -->
<div class="a" style="left:933px;top:222px;width:317px;height:496px;background:#fff;border:1px solid #dedede"></div>
<div class="a" style="left:933px;top:193px;width:57px;height:30px;background:#fafafa;border:1px solid #dedede;border-top:3px solid #3c6a97;border-bottom:none"></div>


<div class="a" style="left:943px;top:233px;width:287px;height:28px;background:#f7f7f7;border-bottom:2px solid #e4e4e4"></div><div class="a" style="left:943px;top:233px;width:25px;height:27px;background:#96b97a"></div><svg class="a" style="left:950px;top:240px" width="12" height="12"><path d="M10 2 L2.5 5.8 L6 6.2 L6.6 9.8Z" fill="#fff"/></svg>
<div class="a" style="left:943px;top:267px;width:287px;height:28px;background:#f7f7f7;border-bottom:2px solid #e4e4e4"></div><div class="a" style="left:943px;top:267px;width:25px;height:27px;background:#f39231"></div><svg class="a" style="left:950px;top:274px" width="12" height="12"><path d="M10 2 L2.5 5.8 L6 6.2 L6.6 9.8Z" fill="#fff"/></svg>
<div class="a" style="left:943px;top:301px;width:287px;height:28px;background:#f7f7f7;border-bottom:2px solid #e4e4e4"></div><div class="a" style="left:943px;top:301px;width:25px;height:27px;background:#8d8d8d"></div><svg class="a" style="left:950px;top:308px" width="12" height="12"><path d="M10 2 L2.5 5.8 L6 6.2 L6.6 9.8Z" fill="#fff"/></svg>
<div class="a" style="left:943px;top:336px;width:287px;height:28px;background:#f7f7f7;border-bottom:2px solid #e4e4e4"></div><div class="a" style="left:943px;top:336px;width:25px;height:27px;background:#8d8d8d"></div><svg class="a" style="left:950px;top:343px" width="12" height="12"><path d="M10 2 L2.5 5.8 L6 6.2 L6.6 9.8Z" fill="#fff"/></svg>
<div class="a" style="left:943px;top:370px;width:287px;height:28px;background:#f7f7f7;border-bottom:2px solid #e4e4e4"></div><div class="a" style="left:943px;top:370px;width:25px;height:27px;background:#8d8d8d"></div><svg class="a" style="left:950px;top:377px" width="12" height="12"><path d="M10 2 L2.5 5.8 L6 6.2 L6.6 9.8Z" fill="#fff"/></svg>
<div class="a" style="left:943px;top:404px;width:287px;height:28px;background:#f7f7f7;border-bottom:2px solid #e4e4e4"></div><div class="a" style="left:943px;top:404px;width:25px;height:27px;background:#8d8d8d"></div><svg class="a" style="left:950px;top:411px" width="12" height="12"><path d="M10 2 L2.5 5.8 L6 6.2 L6.6 9.8Z" fill="#fff"/></svg>
<div class="a" style="left:943px;top:438px;width:287px;height:28px;background:#f7f7f7;border-bottom:2px solid #e4e4e4"></div><div class="a" style="left:943px;top:438px;width:25px;height:27px;background:#8d8d8d"></div><svg class="a" style="left:950px;top:445px" width="12" height="12"><path d="M10 2 L2.5 5.8 L6 6.2 L6.6 9.8Z" fill="#fff"/></svg>
<div class="a" style="left:943px;top:472px;width:287px;height:28px;background:#f7f7f7;border-bottom:2px solid #e4e4e4"></div><div class="a" style="left:943px;top:472px;width:25px;height:27px;background:#8d8d8d"></div><svg class="a" style="left:950px;top:479px" width="12" height="12"><path d="M10 2 L2.5 5.8 L6 6.2 L6.6 9.8Z" fill="#fff"/></svg>
<div class="a" style="left:943px;top:507px;width:287px;height:28px;background:#f7f7f7;border-bottom:2px solid #e4e4e4"></div><div class="a" style="left:943px;top:507px;width:25px;height:27px;background:#8d8d8d"></div><svg class="a" style="left:950px;top:514px" width="12" height="12"><path d="M10 2 L2.5 5.8 L6 6.2 L6.6 9.8Z" fill="#fff"/></svg>
<div class="a" style="left:943px;top:541px;width:287px;height:28px;background:#f7f7f7;border-bottom:2px solid #e4e4e4"></div><div class="a" style="left:943px;top:541px;width:25px;height:27px;background:#8d8d8d"></div><svg class="a" style="left:950px;top:548px" width="12" height="12"><path d="M10 2 L2.5 5.8 L6 6.2 L6.6 9.8Z" fill="#fff"/></svg>
<div class="a" style="left:943px;top:575px;width:287px;height:28px;background:#f7f7f7;border-bottom:2px solid #e4e4e4"></div><div class="a" style="left:943px;top:575px;width:25px;height:27px;background:#8d8d8d"></div><svg class="a" style="left:950px;top:582px" width="12" height="12"><path d="M10 2 L2.5 5.8 L6 6.2 L6.6 9.8Z" fill="#fff"/></svg>
<div class="a" style="left:943px;top:609px;width:287px;height:28px;background:#f7f7f7;border-bottom:2px solid #e4e4e4"></div><div class="a" style="left:943px;top:609px;width:25px;height:27px;background:#8d8d8d"></div><svg class="a" style="left:950px;top:616px" width="12" height="12"><path d="M10 2 L2.5 5.8 L6 6.2 L6.6 9.8Z" fill="#fff"/></svg>
<div class="a" style="left:943px;top:643px;width:287px;height:28px;background:#f7f7f7;border-bottom:2px solid #e4e4e4"></div><div class="a" style="left:943px;top:643px;width:25px;height:27px;background:#8d8d8d"></div><svg class="a" style="left:950px;top:650px" width="12" height="12"><path d="M10 2 L2.5 5.8 L6 6.2 L6.6 9.8Z" fill="#fff"/></svg>
<div class="a" style="left:943px;top:678px;width:287px;height:28px;background:#f7f7f7;border-bottom:2px solid #e4e4e4"></div><div class="a" style="left:943px;top:678px;width:25px;height:27px;background:#8d8d8d"></div><svg class="a" style="left:950px;top:685px" width="12" height="12"><path d="M10 2 L2.5 5.8 L6 6.2 L6.6 9.8Z" fill="#fff"/></svg>

<!-- age range -->
<svg class="a" style="left:243px;top:746px" width="12" height="11"><rect y="0" width="11" height="1.6" fill="#444"/><rect y="4.3" width="11" height="1.6" fill="#444"/><rect y="8.6" width="11" height="1.6" fill="#444"/></svg>

<div class="a" style="left:243px;top:764px;width:663px;height:1px;background:#e6e6e6"></div>
<div class="a" style="left:876px;top:745px;width:30px;height:17px;background:#eee;border:1px solid #d5d5d5"></div>
<svg class="a" style="left:887px;top:751px" width="8" height="5"><path d="M1 1 L4 3.8 L7 1" fill="none" stroke="#444" stroke-width="1.1"/></svg>
<div class="a" style="left:299px;top:804px;width:18px;height:9px;background:#80b3c7"></div>

<div class="a" style="left:421px;top:804px;width:19px;height:9px;background:#f6bd74"></div>


<div class="a" style="left:290px;top:845px;width:616px;height:0;border-top:1px dashed #ddd"></div>
<!-- gender -->
<svg class="a" style="left:933px;top:746px" width="12" height="11"><rect y="0" width="11" height="1.6" fill="#444"/><rect y="4.3" width="11" height="1.6" fill="#444"/><rect y="8.6" width="11" height="1.6" fill="#444"/></svg>

<div class="a" style="left:933px;top:764px;width:317px;height:1px;background:#e6e6e6"></div>
<div class="a" style="left:1221px;top:744px;width:29px;height:17px;background:#eee;border:1px solid #d5d5d5"></div>
<svg class="a" style="left:1231px;top:750px" width="8" height="5"><path d="M1 1 L4 3.8 L7 1" fill="none" stroke="#444" stroke-width="1.1"/></svg>
<svg class="a" style="left:932.8px;top:782.8px" width="8" height="12"><circle cx="3.8" cy="1.5" r="1.5" fill="#444"/><path d="M1.2 3.5 H6.4 Q7.4 3.5 7.4 4.5 V8 H6.2 V5.6 H5.8 V11.6 H4.1 V8.4 H3.5 V11.6 H1.8 V5.6 H1.4 V8 H0.2 V4.5 Q0.2 3.5 1.2 3.5Z" fill="#444"/></svg>


<div class="a" style="left:933px;top:800px;width:317px;height:12px;background:#eee;box-shadow:inset 0 1px 1px rgba(0,0,0,.08)"></div>
<div class="a" style="left:933px;top:800px;width:153px;height:12px;background-color:#338ba1;background-image:linear-gradient(45deg,rgba(255,255,255,.18) 25%,transparent 25%,transparent 50%,rgba(255,255,255,.18) 50%,rgba(255,255,255,.18) 75%,transparent 75%,transparent);background-size:36.4px 36.4px;box-shadow:inset 0 -1px 0 rgba(0,0,0,.12)"></div>
<svg class="a" style="left:932.8px;top:829.3px" width="9" height="12.5"><circle cx="4.2" cy="1.5" r="1.5" fill="#444"/><path d="M3 3.4 H5.4 L8.2 6.6 L7.4 7.3 L6 6 L7.6 9.2 H5.1 V12 H3.3 V9.2 H0.8 L2.4 6 L1 7.3 L0.2 6.6Z" fill="#444"/></svg>


<div class="a" style="left:933px;top:847px;width:317px;height:12px;background:#eee;box-shadow:inset 0 1px 1px rgba(0,0,0,.08)"></div>
<div class="a" style="left:933px;top:847px;width:164px;height:12px;background-color:#f08f25;background-image:linear-gradient(45deg,rgba(255,255,255,.18) 25%,transparent 25%,transparent 50%,rgba(255,255,255,.18) 50%,rgba(255,255,255,.18) 75%,transparent 75%,transparent);background-size:36.4px 36.4px;box-shadow:inset 0 -1px 0 rgba(0,0,0,.12)"></div>
<!-- splitter -->
<div class="a" style="left:219px;top:97px;width:7px;height:777px;background:#ececec;border-left:2px solid #fff;border-right:1px solid #d6d6d6"></div>
<div class="a" style="left:226px;top:97px;width:2px;height:777px;background:#fff"></div>
<svg class="a" style="left:221px;top:612px" width="3" height="12"><circle cx="1.5" cy="1.5" r="0.8" fill="#999"/><circle cx="1.5" cy="5.5" r="0.8" fill="#999"/><circle cx="1.5" cy="9.5" r="0.8" fill="#999"/></svg>
<div class="tx" style="left:577.78px;top:17.89px;font-size:15.25px;line-height:15.25px;color:#7a7a7a;letter-spacing:0.610px">bigtickets.com</div>
<div class="tx" style="left:242.05px;top:65.31px;font-size:12.75px;line-height:12.75px;color:#fff;letter-spacing:-0.505px;font-weight:bold">Dashboard</div>
<div class="tx" style="left:1005.04px;top:65.42px;font-size:12.5px;line-height:12.5px;color:#fff;letter-spacing:0.162px;font-weight:bold">Support</div>
<div class="tx" style="left:46.80px;top:136.61px;font-size:10.5px;line-height:10.5px;color:#fff;letter-spacing:-0.130px;font-weight:bold;text-shadow:0 1px 0 rgba(0,0,0,.55)">5 active events</div>
<div class="tx" style="left:35.95px;top:193.35px;font-size:11.75px;line-height:11.75px;color:#fff;letter-spacing:-0.303px;font-weight:bold;text-shadow:0 1px 0 rgba(0,0,0,.55)">DASHBOARD</div>
<div class="tx" style="left:36.84px;top:242.57px;font-size:11.5px;line-height:11.5px;color:#fff;letter-spacing:-0.378px;font-weight:bold;text-shadow:0 1px 0 rgba(0,0,0,.55)">CHARTS &amp; REPORTS</div>
<div class="tx" style="left:34.67px;top:286.82px;font-size:12.5px;line-height:12.5px;color:#fff;letter-spacing:-0.109px;text-shadow:0 1px 0 rgba(0,0,0,.55)">Event Reports</div>
<div class="tx" style="left:34.76px;top:329.62px;font-size:12.5px;line-height:12.5px;color:#fff;letter-spacing:-0.080px;text-shadow:0 1px 0 rgba(0,0,0,.55)">Analyze</div>
<div class="tx" style="left:27.81px;top:372.62px;font-size:12.5px;line-height:12.5px;color:#fff;letter-spacing:-0.037px;text-shadow:0 1px 0 rgba(0,0,0,.55)">Social Dashboard</div>
<div class="tx" style="left:28.04px;top:415.02px;font-size:12.5px;line-height:12.5px;color:#fff;letter-spacing:-0.356px;text-shadow:0 1px 0 rgba(0,0,0,.55)">FANalytics™</div>
<div class="tx" style="left:28.04px;top:458.22px;font-size:12.5px;line-height:12.5px;color:#fff;letter-spacing:-0.165px;text-shadow:0 1px 0 rgba(0,0,0,.55)">Email Campaigns</div>
<div class="tx" style="left:28.25px;top:500.71px;font-size:12.75px;line-height:12.75px;color:#fff;letter-spacing:-0.136px;text-shadow:0 1px 0 rgba(0,0,0,.55)">Attendee Statistics</div>
<div class="tx" style="left:35.96px;top:547.15px;font-size:11.75px;line-height:11.75px;color:#fff;letter-spacing:-0.272px;font-weight:bold;text-shadow:0 1px 0 rgba(0,0,0,.55)">MY EVENTS</div>
<div class="tx" style="left:36.61px;top:595.85px;font-size:11.75px;line-height:11.75px;color:#fff;letter-spacing:-0.254px;font-weight:bold;text-shadow:0 1px 0 rgba(0,0,0,.55)">MY ATTENDEES</div>
<div class="tx" style="left:35.96px;top:644.25px;font-size:11.75px;line-height:11.75px;color:#fff;letter-spacing:-0.082px;font-weight:bold;text-shadow:0 1px 0 rgba(0,0,0,.55)">EMAIL MANAGEMENT</div>
<div class="tx" style="left:5.86px;top:702.52px;font-size:12.5px;line-height:12.5px;color:#dedede;letter-spacing:-0.116px;font-weight:bold;text-shadow:0 1px 0 rgba(0,0,0,.4)">Notifications</div>
<div class="tx" style="left:42.92px;top:744.51px;font-size:12.75px;line-height:12.75px;color:#fff;letter-spacing:-0.192px;text-shadow:0 1px 0 rgba(0,0,0,.3)">This is an emulation session</div>
<div class="tx" style="left:243.18px;top:106.91px;font-size:10.5px;line-height:10.5px;color:#707070;letter-spacing:-0.080px">Good Evening, Michael!</div>
<div class="tx" style="left:262.07px;top:152.47px;font-size:13.5px;line-height:13.5px;color:#404040;letter-spacing:-0.260px;font-weight:bold">Geography</div>
<div class="tx" style="left:816.84px;top:158.04px;font-size:12.0px;line-height:12.0px;color:#333;letter-spacing:-0.354px">Print Page</div>
<div class="tx" style="left:273.79px;top:201.74px;font-size:12.0px;line-height:12.0px;color:#fff;letter-spacing:-0.255px;font-weight:bold">Find</div>
<div class="tx" style="left:317.63px;top:202.12px;font-size:12.5px;line-height:12.5px;color:#333;letter-spacing:-0.281px">Select an Event</div>
<div class="tx" style="left:951.52px;top:152.67px;font-size:13.5px;line-height:13.5px;color:#404040;letter-spacing:-0.113px;font-weight:bold">Location</div>
<div class="tx" style="left:1103.84px;top:158.34px;font-size:12.0px;line-height:12.0px;color:#fff;letter-spacing:-0.202px">Export Attendee Data</div>
<div class="tx" style="left:942.11px;top:202.82px;font-size:12.5px;line-height:12.5px;color:#444;letter-spacing:-0.182px">By City</div>
<div class="tx" style="left:1001.66px;top:203.22px;font-size:12.5px;line-height:12.5px;color:#3f6d9b;letter-spacing:-0.222px">By Zip</div>
<div class="tx" style="left:262.18px;top:744.18px;font-size:13.25px;line-height:13.25px;color:#404040;letter-spacing:-0.384px;font-weight:bold">Age Range</div>
<div class="tx" style="left:320.61px;top:804.50px;font-size:10.75px;line-height:10.75px;color:#333;letter-spacing:0.234px">Male</div>
<div class="tx" style="left:443.52px;top:804.29px;font-size:11.0px;line-height:11.0px;color:#333;letter-spacing:0.054px">Female</div>
<div class="tx" style="left:254.62px;top:840.08px;font-size:11.25px;line-height:11.25px;color:#333;letter-spacing:0.613px">80%</div>
<div class="tx" style="left:951.65px;top:744.37px;font-size:13.5px;line-height:13.5px;color:#404040;letter-spacing:-0.097px;font-weight:bold">Gender</div>
<div class="tx" style="left:942.11px;top:782.21px;font-size:12.75px;line-height:12.75px;color:#444;letter-spacing:0.092px">Male</div>
<div class="tx" style="left:1209.51px;top:782.63px;font-size:12.25px;line-height:12.25px;color:#333;letter-spacing:-0.192px">48.37%</div>
<div class="tx" style="left:944.04px;top:829.02px;font-size:12.5px;line-height:12.5px;color:#444;letter-spacing:-0.226px">Female</div>
<div class="tx" style="left:1209.33px;top:829.43px;font-size:12.25px;line-height:12.25px;color:#333;letter-spacing:-0.155px">51.63%</div>
<div class="tx" style="left:974.86px;top:239.12px;font-size:12.5px;line-height:12.5px;color:#3d5f82;letter-spacing:-0.205px">Atlanta, GA</div>
<div class="tx" style="left:1186.60px;top:239.72px;font-size:10.25px;line-height:10.25px;color:#8a8a8a;letter-spacing:0.062px">41.02%</div>
<div class="tx" style="left:974.11px;top:273.11px;font-size:12.75px;line-height:12.75px;color:#3d5f82;letter-spacing:-0.141px">Marietta, GA</div>
<div class="tx" style="left:1192.05px;top:273.71px;font-size:10.5px;line-height:10.5px;color:#8a8a8a;letter-spacing:-0.150px">5.23%</div>
<div class="tx" style="left:974.11px;top:307.52px;font-size:12.5px;line-height:12.5px;color:#3d5f82;letter-spacing:-0.272px">Kennesaw, GA</div>
<div class="tx" style="left:1197.74px;top:307.91px;font-size:10.5px;line-height:10.5px;color:#8a8a8a;letter-spacing:-0.150px">3.1%</div>
<div class="tx" style="left:974.86px;top:341.72px;font-size:12.5px;line-height:12.5px;color:#3d5f82;letter-spacing:-0.103px">Alpharetta, GA</div>
<div class="tx" style="left:1192.05px;top:342.11px;font-size:10.5px;line-height:10.5px;color:#8a8a8a;letter-spacing:-0.150px">2.78%</div>
<div class="tx" style="left:974.86px;top:375.92px;font-size:12.5px;line-height:12.5px;color:#3d5f82;letter-spacing:-0.206px">Acworth, GA</div>
<div class="tx" style="left:1192.05px;top:376.31px;font-size:10.5px;line-height:10.5px;color:#8a8a8a;letter-spacing:-0.150px">2.35%</div>
<div class="tx" style="left:974.11px;top:410.12px;font-size:12.5px;line-height:12.5px;color:#3d5f82;letter-spacing:-0.146px">Decatur, GA</div>
<div class="tx" style="left:1192.05px;top:410.51px;font-size:10.5px;line-height:10.5px;color:#8a8a8a;letter-spacing:-0.150px">2.32%</div>
<div class="tx" style="left:974.27px;top:444.53px;font-size:12.25px;line-height:12.25px;color:#3d5f82;letter-spacing:-0.219px">Smyrna, GA</div>
<div class="tx" style="left:1192.05px;top:444.71px;font-size:10.5px;line-height:10.5px;color:#8a8a8a;letter-spacing:-0.150px">2.27%</div>
<div class="tx" style="left:974.20px;top:478.73px;font-size:12.25px;line-height:12.25px;color:#3d5f82;letter-spacing:-0.259px">Roswell, GA</div>
<div class="tx" style="left:1192.05px;top:478.91px;font-size:10.5px;line-height:10.5px;color:#8a8a8a;letter-spacing:-0.150px">2.02%</div>
<div class="tx" style="left:974.11px;top:512.72px;font-size:12.5px;line-height:12.5px;color:#3d5f82;letter-spacing:-0.206px">Lawrenceville, GA</div>
<div class="tx" style="left:1192.05px;top:513.11px;font-size:10.5px;line-height:10.5px;color:#8a8a8a;letter-spacing:-0.150px">1.73%</div>
<div class="tx" style="left:974.89px;top:546.92px;font-size:12.5px;line-height:12.5px;color:#3d5f82;letter-spacing:-0.249px">Woodstock, GA</div>
<div class="tx" style="left:1197.74px;top:547.31px;font-size:10.5px;line-height:10.5px;color:#8a8a8a;letter-spacing:-0.150px">1.3%</div>
<div class="tx" style="left:974.40px;top:581.12px;font-size:12.5px;line-height:12.5px;color:#3d5f82;letter-spacing:-0.266px">Cumming, GA</div>
<div class="tx" style="left:1192.05px;top:581.51px;font-size:10.5px;line-height:10.5px;color:#8a8a8a;letter-spacing:-0.150px">1.19%</div>
<div class="tx" style="left:974.11px;top:615.11px;font-size:12.75px;line-height:12.75px;color:#3d5f82;letter-spacing:-0.195px">Duluth, GA</div>
<div class="tx" style="left:1192.05px;top:615.71px;font-size:10.5px;line-height:10.5px;color:#8a8a8a;letter-spacing:-0.150px">1.03%</div>
<div class="tx" style="left:974.86px;top:649.52px;font-size:12.5px;line-height:12.5px;color:#3d5f82;letter-spacing:-0.339px">Athens, GA</div>
<div class="tx" style="left:1192.05px;top:649.91px;font-size:10.5px;line-height:10.5px;color:#8a8a8a;letter-spacing:-0.150px">0.76%</div>
<div class="tx" style="left:974.11px;top:683.72px;font-size:12.5px;line-height:12.5px;color:#3d5f82;letter-spacing:-0.217px">Norcross, GA</div>
<div class="tx" style="left:1192.05px;top:684.11px;font-size:10.5px;line-height:10.5px;color:#8a8a8a;letter-spacing:-0.150px">0.76%</div>
</div>
</body></html>
